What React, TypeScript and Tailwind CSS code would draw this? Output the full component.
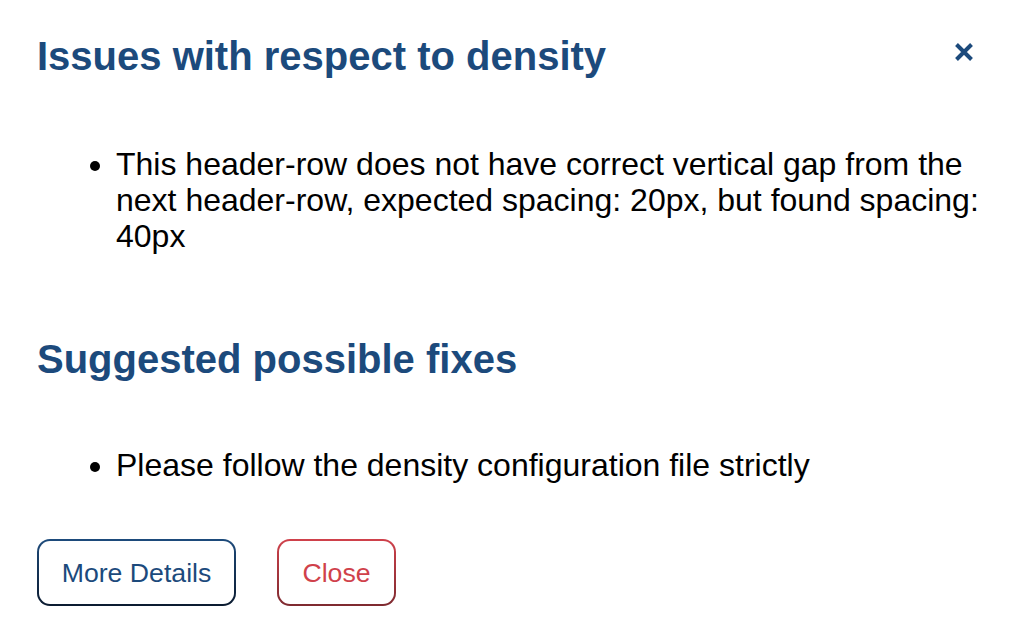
import React from "react";

export default function App() {
  return (
    <div className="w-[1012px] h-[644px] bg-white relative overflow-hidden" style={{ fontFamily: '"Liberation Sans", Arial, sans-serif' }}>
      <div className="pl-[37px] pr-[16px] pt-[33px] flex flex-col">
        <div className="flex items-start justify-between">
          <h2 className="text-[40px] leading-[46px] font-bold text-[#1c4a7c]">Issues with respect to density</h2>
          <button className="mt-[9px] mr-[22px] w-[20px] h-[20px] flex items-center justify-center" aria-label="close">
            <svg width="20" height="20" viewBox="0 0 20 20">
              <path d="M2.5 2.5 L17.5 17.5 M17.5 2.5 L2.5 17.5" stroke="#1c4a7c" strokeWidth="4" strokeLinecap="butt" />
            </svg>
          </button>
        </div>
        <ul className="list-disc pl-[79px] mt-[67px] text-[32px] leading-[36px] text-black">
          <li>This header-row does not have correct vertical gap from the next header-row, expected spacing: 20px, but found spacing: 40px</li>
        </ul>
        <h2 className="mt-[82px] text-[40px] leading-[46px] font-bold text-[#1c4a7c]">Suggested possible fixes</h2>
        <ul className="list-disc pl-[79px] mt-[65px] text-[32px] leading-[36px] text-black">
          <li>Please follow the density configuration file strictly</li>
        </ul>
        <div className="mt-[56px] flex gap-[41px]">
          <div className="rounded-[13px] p-[2px] bg-linear-to-b from-[#1d4b7c] to-[#0b1b30]">
            <button className="h-[63px] w-[195px] rounded-[11px] bg-white text-[26.67px] text-[#1c4a7c] flex items-center justify-center">More Details</button>
          </div>
          <div className="rounded-[13px] p-[2px] bg-linear-to-b from-[#d0414b] to-[#7e2a30]">
            <button className="h-[63px] w-[115px] rounded-[11px] bg-white text-[26.67px] text-[#d0414b] flex items-center justify-center">Close</button>
          </div>
        </div>
      </div>
    </div>
  );
}
